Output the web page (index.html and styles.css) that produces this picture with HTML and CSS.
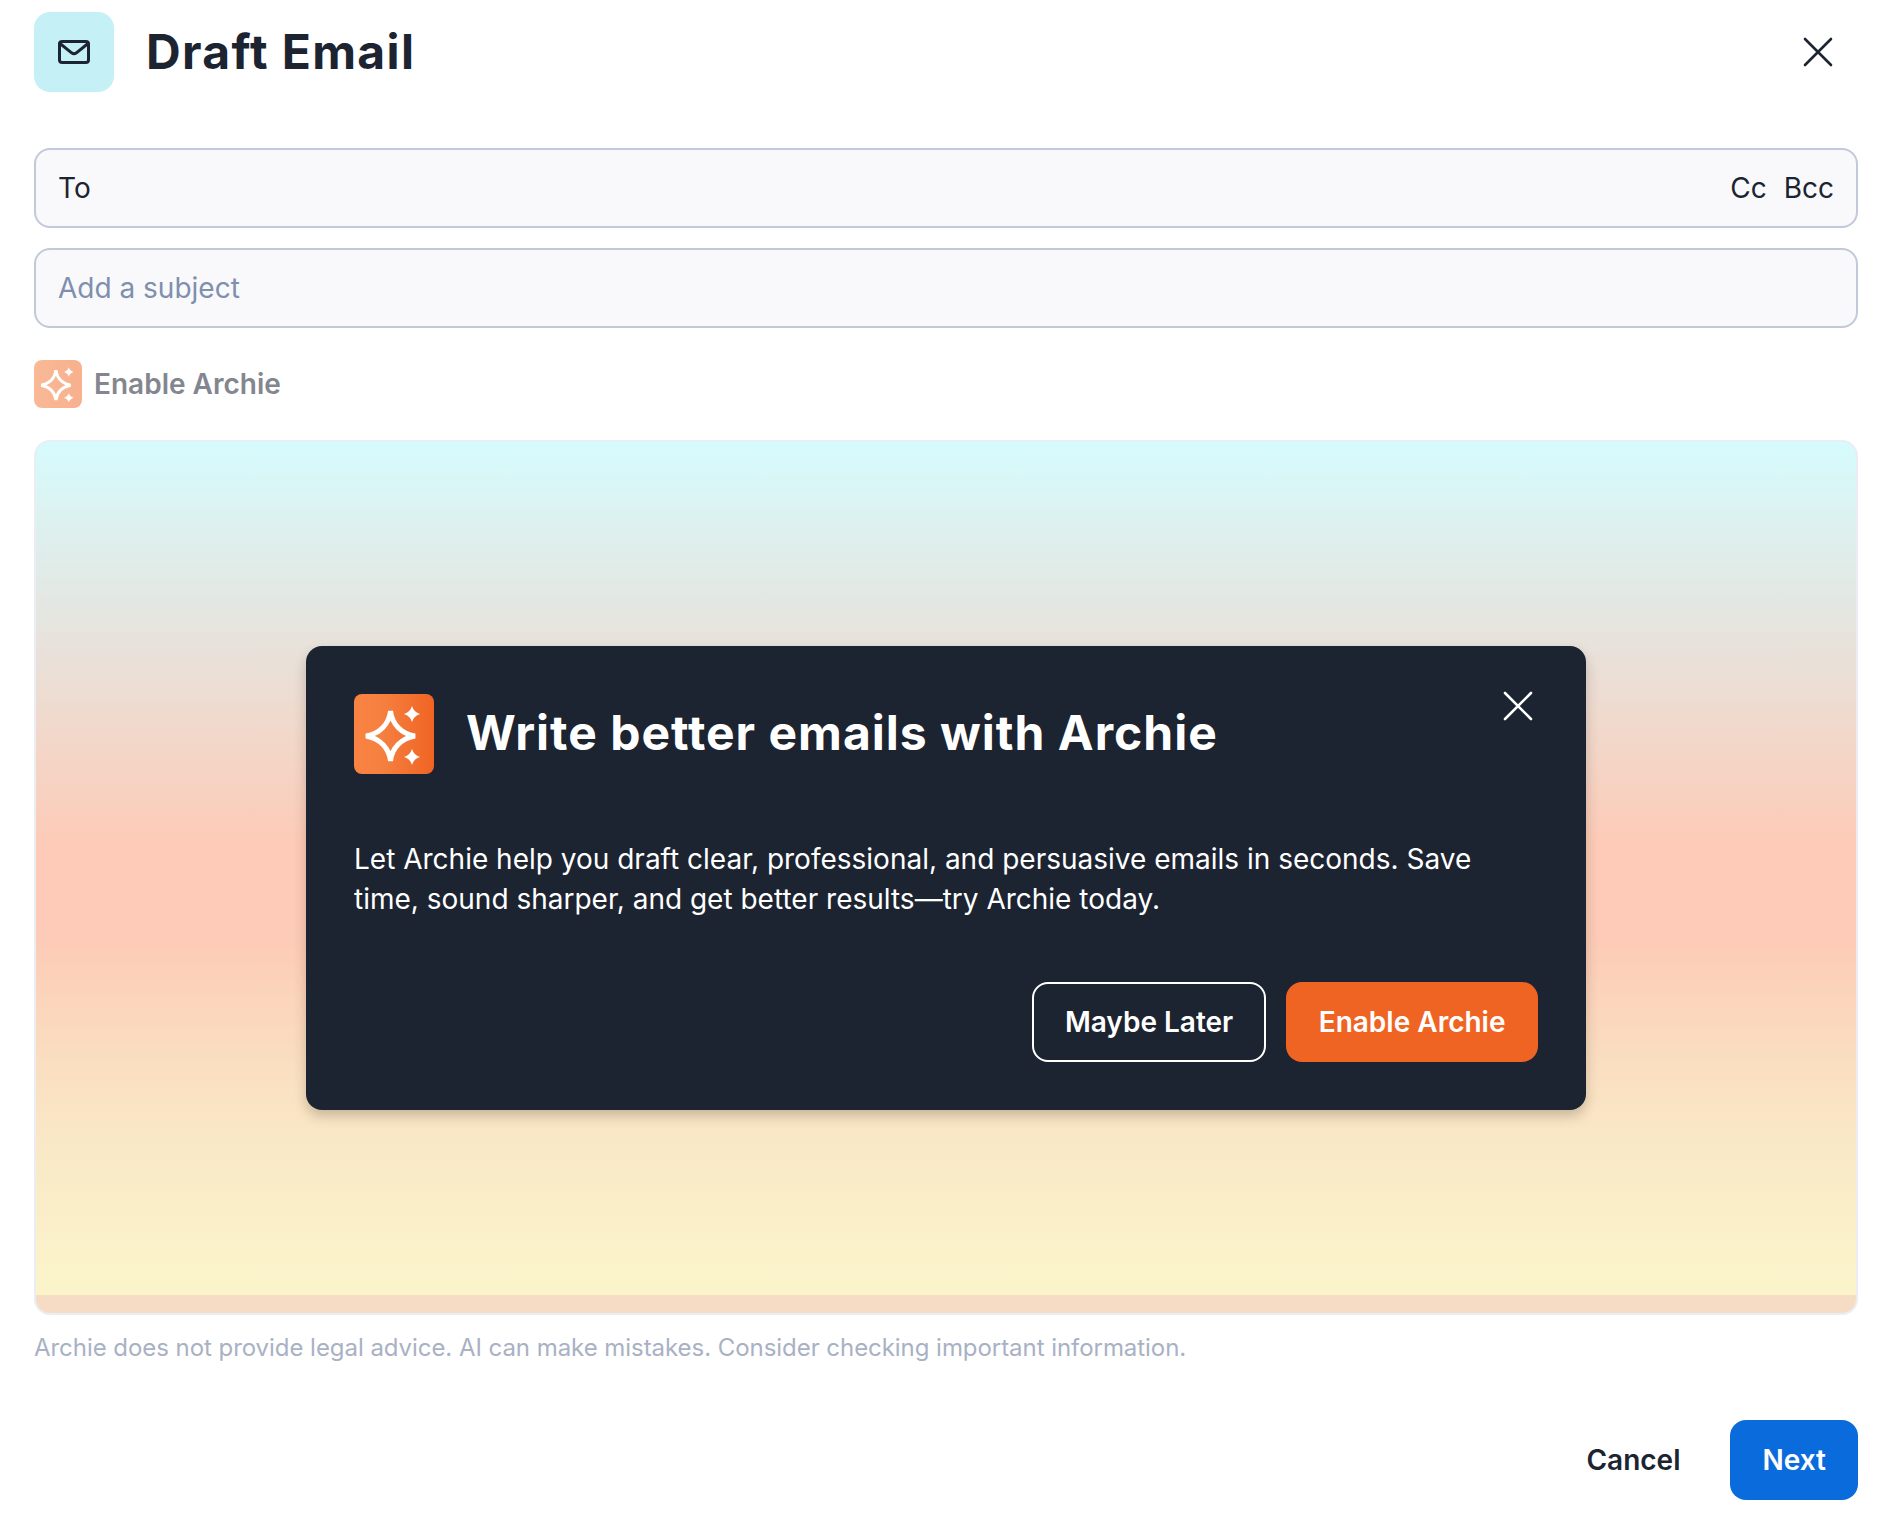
FILE: index.html
```html
<!DOCTYPE html>
<html lang="en">
<head>
<meta charset="utf-8">
<title>Draft Email</title>
<link rel="stylesheet" href="styles.css">
</head>
<body>
<main class="dialog">
  <header class="head">
    <div class="head-icon">
      <svg width="32" height="24" viewBox="0 0 32 24" fill="none" stroke="#1c2431" stroke-width="3" stroke-linecap="round" stroke-linejoin="round"><rect x="1.500" y="1.500" width="29" height="21" rx="2.600"/><path d="M2 3.500 13.600 12.800a4 4 0 0 0 4.800 0L30 3.500"/></svg>
    </div>
    <h1 class="title">Draft Email</h1>
    <svg class="x" width="30" height="30" viewBox="0 0 30 30" fill="none" stroke="#1c2431" stroke-width="2.600" stroke-linecap="round"><path d="M2 2 28 28M28 2 2 28"/></svg>
  </header>
  <div class="field to"><span>To</span><span class="cc"><span>Cc</span><span>Bcc</span></span></div>
  <div class="field subject">Add a subject</div>
  <div class="enable">
    <span class="spark-box small">
      <svg width="48" height="48" viewBox="0 0 80 80"><path class="big" d="M36.500 17C38 30 47 39.500 61 42C47 44.500 38 54 36.500 67C35 54 26 44.500 12 42C26 39.500 35 30 36.500 17Z"/><path class="st" d="M58 12Q59.800 18.200 66 20Q59.800 21.800 58 28Q56.200 21.800 50 20Q56.200 18.200 58 12Z"/><path class="st" d="M58 55Q59.800 61.200 66 63Q59.800 64.800 58 71Q56.200 64.800 50 63Q56.200 61.200 58 55Z"/></svg>
    </span>
    <span class="enable-label">Enable Archie</span>
  </div>
  <section class="panel">
    <div class="card">
      <div class="card-head">
        <span class="spark-box">
          <svg width="80" height="80" viewBox="0 0 80 80"><path class="big" d="M36.500 17C38 30 47 39.500 61 42C47 44.500 38 54 36.500 67C35 54 26 44.500 12 42C26 39.500 35 30 36.500 17Z"/><path class="st" d="M58 12Q59.800 18.200 66 20Q59.800 21.800 58 28Q56.200 21.800 50 20Q56.200 18.200 58 12Z"/><path class="st" d="M58 55Q59.800 61.200 66 63Q59.800 64.800 58 71Q56.200 64.800 50 63Q56.200 61.200 58 55Z"/></svg>
        </span>
        <h2 class="card-title">Write better emails with Archie</h2>
        <svg class="card-x" width="30" height="30" viewBox="0 0 30 30" fill="none" stroke="#fff" stroke-width="2.600" stroke-linecap="round"><path d="M2 2 28 28M28 2 2 28"/></svg>
      </div>
      <p class="card-text">Let Archie help you draft clear, professional, and persuasive emails in seconds. Save time, sound sharper, and get better results—try Archie today.</p>
      <div class="card-actions">
        <button class="btn outline">Maybe Later</button>
        <button class="btn orange">Enable Archie</button>
      </div>
    </div>
    <div class="strip"></div>
  </section>
  <p class="note">Archie does not provide legal advice. AI can make mistakes. Consider checking important information.</p>
  <footer class="foot">
    <button class="btn ghost">Cancel</button>
    <button class="btn blue">Next</button>
  </footer>
</main>
</body>
</html>
```
FILE: styles.css
```css
* { box-sizing: border-box; }
html, body { margin: 0; background: #fff; }
body { font-family: Inter, "Liberation Sans", sans-serif; color: #1c2431; }
.dialog { width: 1894px; height: 1516px; padding: 12px 36px 16px 34px; display: flex; flex-direction: column; }
.head { display: flex; align-items: center; height: 80px; }
.head-icon { width: 80px; height: 80px; border-radius: 16px; background: #c5f0f6; display: flex; align-items: center; justify-content: center; }
.title { margin: 0 0 0 32px; font-size: 48px; font-weight: 700; line-height: 60px; letter-spacing: 1.350px; flex: 1; }
.x { margin-right: 25px; }
.field { height: 80px; border: 2px solid #c1c9da; border-radius: 16px; background: #f9f9fc; padding: 0 22px; display: flex; align-items: center; justify-content: space-between; font-size: 28px; }
.to { margin-top: 56px; }
.subject { margin-top: 20px; color: #7f8fae; }
.cc { display: flex; gap: 17px; }
.enable { display: flex; align-items: center; gap: 12px; margin-top: 32px; height: 48px; }
.spark-box { width: 80px; height: 80px; border-radius: 8px; background: linear-gradient(90deg, #f88342 0%, #f58040 35%, #f06423 100%); display: block; flex: none; }
.spark-box svg { display: block; }
.spark-box.small { width: 48px; height: 48px; background: linear-gradient(90deg, #f9b996, #f8b08d); }
.st { fill: #fff; }
.big { fill: none; stroke: #fff; stroke-width: 5; }
.enable-label { font-size: 28px; font-weight: 600; color: #84868f; }
.panel { position: relative; height: 875px; margin-top: 32px; border: 2px solid #ebedf4; border-radius: 16px; overflow: hidden; display: flex; align-items: center; justify-content: center; background: linear-gradient(180deg, #d6fbfd 0%, #e5e5df 20.500%, #fdcbb7 46%, #fdcbb7 57%, #fadec0 71%, #f9e9c6 81.500%, #fbf4cb 97%); }
.strip { position: absolute; left: 0; right: 0; bottom: 0; height: 18px; background: #f6dcc5; }
.card { width: 1280px; height: 464px; padding: 48px; border-radius: 16px; background: #1c2331; color: #fff; box-shadow: 0 6px 12px rgba(60, 50, 40, .25); display: flex; flex-direction: column; }
.card-head { display: flex; align-items: center; position: relative; height: 80px; }
.card-title { margin: 0 0 0 32px; font-size: 48px; font-weight: 700; line-height: 60px; letter-spacing: 1px; flex: 1; position: relative; top: -1px; }
.card-x { position: absolute; top: -3px; right: 5px; }
.card-text { margin: 65px 0 0; font-size: 28px; line-height: 40px; }
.card-actions { display: flex; justify-content: flex-end; gap: 20px; margin-top: auto; }
.btn { height: 80px; border: 0; border-radius: 16px; font-family: inherit; font-size: 28px; font-weight: 600; padding: 0 32.500px; color: #fff; background: none; }
.outline { border: 2px solid #fff; padding: 0 31px; }
.orange { background: #f06423; }
.note { margin: 18px 0 0; font-size: 24px; line-height: 30px; letter-spacing: -0.050px; color: #a9b1c4; }
.foot { display: flex; justify-content: flex-end; gap: 17px; margin-top: auto; }
.ghost { color: #1c2431; }
.blue { background: #0a6cdc; width: 128px; }
```
